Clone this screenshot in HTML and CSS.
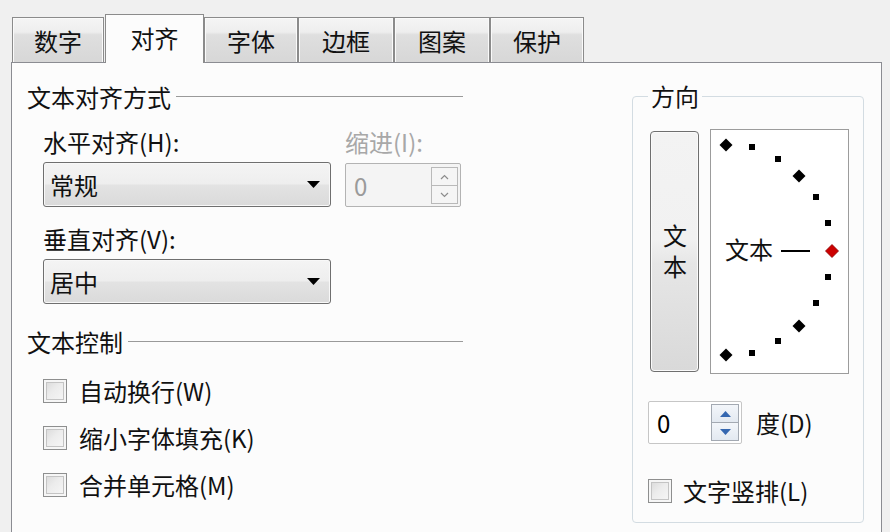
FILE: index.html
```html
<!DOCTYPE html>
<html lang="zh-CN">
  <head>
    <meta charset="UTF-8">
    <title>设置单元格格式 - 对齐</title>
    <link rel="stylesheet" href="styles.css">
  </head>
  <body>
    <!-- tab strip -->
    <div class="tabs">
      <div class="tab tab-num">数字</div>
      <div class="tab active">对齐</div>
      <div class="tab tab-font">字体</div>
      <div class="tab tab-border">边框</div>
      <div class="tab tab-pattern">图案</div>
      <div class="tab tab-protect">保护</div>
    </div>

    <div class="panel">
      <div class="left">
        <div class="group-title">文本对齐方式</div>

        <div class="field-row">
          <div class="field field-wide">
            <div class="label">水平对齐(H):</div>
            <div class="combo">
              <span>常规</span>
              <svg class="combo-arrow" width="13" height="7" viewBox="0 0 13 7"><path d="M0 0H13L6.5 7Z" fill="#000"/></svg>
            </div>
          </div>
          <div class="field field-indent disabled">
            <div class="label">缩进(I):</div>
            <div class="spin spin-disabled">
              <span class="spin-value">0</span>
              <div class="spin-buttons">
                <div class="spin-btn"><svg width="9" height="6" viewBox="0 0 9 6"><path d="M1 5L4.5 1.5L8 5" fill="none" stroke="#8c8c8c" stroke-width="1.2"/></svg></div>
                <div class="spin-btn"><svg width="9" height="6" viewBox="0 0 9 6"><path d="M1 1L4.5 4.5L8 1" fill="none" stroke="#8c8c8c" stroke-width="1.2"/></svg></div>
              </div>
            </div>
          </div>
        </div>

        <div class="field field-wide field-v">
          <div class="label">垂直对齐(V):</div>
          <div class="combo">
            <span>居中</span>
            <svg class="combo-arrow" width="13" height="7" viewBox="0 0 13 7"><path d="M0 0H13L6.5 7Z" fill="#000"/></svg>
          </div>
        </div>

        <div class="group-title group-control">文本控制</div>

        <div class="check-row"><span class="check"></span>自动换行(W)</div>
        <div class="check-row"><span class="check"></span>缩小字体填充(K)</div>
        <div class="check-row"><span class="check"></span>合并单元格(M)</div>
      </div>

      <fieldset class="orient">
        <legend>方向</legend>
        <div class="orient-top">
          <div class="vertical-btn"><span class="vertical-label">文本</span></div>
          <div class="dial">
            <svg width="137" height="243" viewBox="0 0 137 243">
              <g fill="#000">
                <path d="M15 8.5l6.5 6.5-6.5 6.5-6.5-6.5z"/>
                <rect x="38" y="14" width="6" height="6"/>
                <rect x="64" y="26" width="6" height="6"/>
                <path d="M88 39.5l6.5 6.5-6.5 6.5-6.5-6.5z"/>
                <rect x="102" y="64" width="6" height="6"/>
                <rect x="114" y="90" width="6" height="6"/>
                <rect x="114" y="144" width="6" height="6"/>
                <rect x="102" y="170" width="6" height="6"/>
                <path d="M88 189.5l6.5 6.5-6.5 6.5-6.5-6.5z"/>
                <rect x="64" y="208" width="6" height="6"/>
                <rect x="38" y="220" width="6" height="6"/>
                <path d="M15 218.5l6.5 6.5-6.5 6.5-6.5-6.5z"/>
              </g>
              <path d="M121 114.5l6.5 6.5-6.5 6.5-6.5-6.5z" fill="#cc0000" stroke="#8a0000" stroke-width="0.8"/>
              <text x="14" y="129" class="dial-text">文本</text>
              <rect x="70" y="120" width="29" height="2" fill="#000"/>
            </svg>
          </div>
        </div>

        <div class="degree-row">
          <div class="spin spin-degree">
            <span class="spin-value">0</span>
            <div class="spin-buttons">
              <div class="spin-btn blue"><svg width="11" height="6" viewBox="0 0 11 6"><path d="M0 6L5.5 0L11 6Z" fill="#3567b0"/></svg></div>
              <div class="spin-btn blue"><svg width="11" height="6" viewBox="0 0 11 6"><path d="M0 0L5.5 6L11 0Z" fill="#3567b0"/></svg></div>
            </div>
          </div>
          <span class="degree-label">度(D)</span>
        </div>

        <div class="check-row vertical-text"><span class="check"></span>文字竖排(L)</div>
      </fieldset>
    </div>
  </body>
</html>
```

FILE: styles.css
```css
body {
    margin: 0;
    background: #f0f0f0;
    font-family: "Noto Sans CJK SC", "Liberation Sans", sans-serif;
    font-size: 24px;
    color: #111;
    overflow: hidden;
}

/* tabs */
.tabs {
    display: flex;
    align-items: flex-end;
    padding: 14px 0 0 12px;
    height: 62px;
    box-sizing: border-box;
}
.tab {
    box-sizing: border-box;
    height: 45px;
    padding-top: 11px;
    line-height: 24px;
    text-align: center;
    border: 1px solid #8b8b8b;
    border-bottom: none;
    background: linear-gradient(#f5f5f5 0%, #eeeeee 32%, #dfdfdf 38%, #d7d7d7 100%);
    box-shadow: inset 1px 1px 0 #fafafa, inset -1px 0 0 #fafafa;
}
.tab-num { width: 92px; margin-right: 1px; }
.tab-font { width: 94px; }
.tab-border { width: 96px; }
.tab-pattern { width: 96px; }
.tab-protect { width: 94px; }
.tab.active {
    width: 99px;
    height: 49px;
    margin-bottom: -1px;
    padding-top: 11px;
    background: #fcfcfc;
    box-shadow: none;
    position: relative;
    z-index: 1;
}

/* main panel */
.panel {
    display: flex;
    align-items: flex-start;
    margin-left: 11px;
    width: 871px;
    height: 470px;
    box-sizing: border-box;
    border: 1px solid #8b8c92;
    border-bottom: none;
    background: #fcfcfc;
    padding: 22px 17px 0 15px;
}

.left {
    width: 436px;
}

.group-title {
    display: flex;
    align-items: center;
    gap: 5px;
    line-height: 24px;
    height: 24px;
    white-space: nowrap;
}
.group-title::after {
    content: "";
    flex: 1;
    height: 1px;
    margin-top: -1px;
    background: #9a9a9a;
}
.group-control {
    margin-top: 26px;
}

.field-row {
    display: flex;
    margin-top: 21px;
}
.field-wide {
    margin-left: 16px;
    width: 288px;
}
.field-indent {
    margin-left: 14px;
}
.field-v {
    margin-top: 20px;
}
.label {
    line-height: 24px;
    height: 24px;
}
.disabled .label {
    color: #a8a8a8;
}

.combo {
    display: flex;
    align-items: center;
    justify-content: space-between;
    box-sizing: border-box;
    height: 45px;
    margin-top: 8px;
    padding: 0 10px 0 6px;
    border: 1px solid #6f6f6f;
    border-radius: 3px;
    background: linear-gradient(#f4f4f4 0%, #eeeeee 48%, #e3e3e3 52%, #dadada 100%);
    box-shadow: inset 0 0 0 1px #f8f8f8;
}

/* spin boxes */
.spin {
    display: flex;
    align-items: center;
    justify-content: space-between;
    box-sizing: border-box;
    border-radius: 2px;
}
.spin-disabled {
    width: 116px;
    height: 44px;
    margin-top: 9px;
    padding: 3px 2px 2px 8px;
    border: 1px solid #b3b3b3;
    background: #f4f4f4;
    color: #9a9a9a;
}
.spin-buttons {
    display: flex;
    flex-direction: column;
    align-self: stretch;
}
.spin-btn {
    flex: 1;
    width: 27px;
    box-sizing: border-box;
    display: flex;
    align-items: center;
    justify-content: center;
    border: 1px solid #b9b9b9;
    background: #f5f5f5;
}
.spin-btn + .spin-btn {
    border-top: none;
}
.spin-degree {
    width: 94px;
    height: 43px;
    padding: 2px 2px 2px 8px;
    border: 1px solid #c6c6c6;
    background: #fff;
    color: #000;
}
.spin-btn.blue {
    width: 28px;
    border-color: #a3a9b2;
    background: linear-gradient(#f3f6fa, #e3e9f1);
}

/* checkboxes */
.check-row {
    display: flex;
    align-items: center;
    height: 24px;
    line-height: 24px;
    margin-top: 23px;
    padding-left: 16px;
    white-space: nowrap;
}
.group-control + .check-row {
    margin-top: 25px;
}
.check {
    width: 24px;
    height: 24px;
    box-sizing: border-box;
    margin-right: 12px;
    border: 1px solid #8e8f8f;
    background: linear-gradient(135deg, #d6d6d6 0%, #ececec 45%, #f8f8f8 100%);
    box-shadow: inset 0 0 0 2px #f6f6f6, inset 0 0 0 3px #c4c4c4;
}

/* orientation group */
.orient {
    box-sizing: border-box;
    width: 232px;
    min-width: 0;
    margin: -1px 0 0 auto;
    padding: 21px 0 19px 15px;
    border: 1px solid #d3dce2;
    border-radius: 4px;
}
.orient legend {
    padding: 0 3px;
    line-height: 24px;
}
.orient-top {
    display: flex;
    align-items: center;
    gap: 11px;
}
.vertical-btn {
    display: flex;
    align-items: center;
    justify-content: center;
    width: 49px;
    height: 241px;
    margin-left: 2px;
    box-sizing: border-box;
    border: 1px solid #6f6f6f;
    border-radius: 4px;
    background: linear-gradient(#f3f3f3 0%, #f1f1f1 45%, #e6e6e6 55%, #d9d9d9 100%);
    box-shadow: inset 0 0 0 1px #fafafa;
}
.vertical-label {
    writing-mode: vertical-rl;
    letter-spacing: 7px;
    line-height: 24px;
    margin-bottom: -7px;
}
.dial {
    width: 139px;
    height: 245px;
    box-sizing: border-box;
    border: 1px solid #9c9c9c;
    background: #fff;
}
.dial svg {
    display: block;
}
.dial-text {
    font-family: "Noto Sans CJK SC", sans-serif;
    font-size: 24px;
    fill: #111;
}

.degree-row {
    display: flex;
    align-items: center;
    margin-top: 27px;
}
.degree-label {
    margin-left: 14px;
    line-height: 24px;
}
.vertical-text {
    margin-top: 35px;
    padding-left: 0;
}
.vertical-text .check {
    margin-right: 11px;
}
```
